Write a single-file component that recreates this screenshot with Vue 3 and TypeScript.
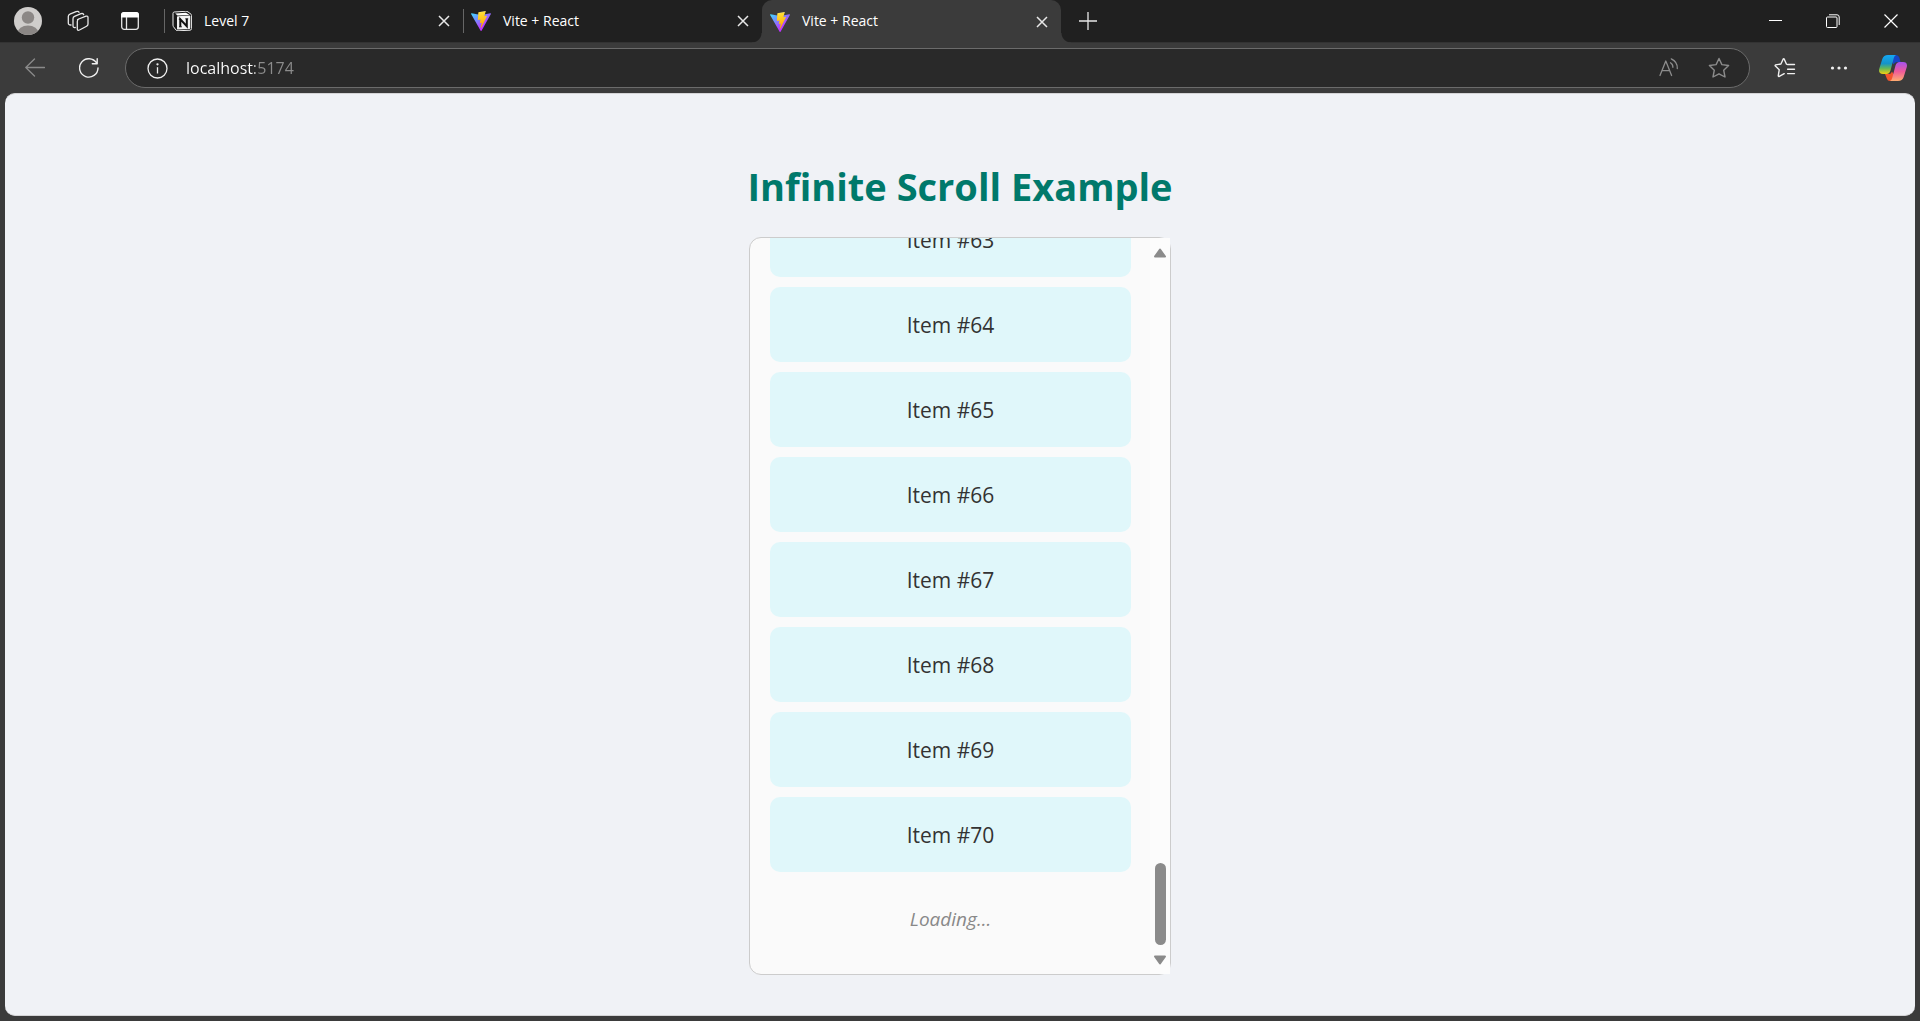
<script setup lang="ts">
import { ref } from 'vue'

interface Tab {
  id: number
  title: string
  icon: 'notion' | 'vite'
}

const tabs: Tab[] = [
  { id: 1, title: 'Level 7', icon: 'notion' },
  { id: 2, title: 'Vite + React', icon: 'vite' },
  { id: 3, title: 'Vite + React', icon: 'vite' },
]
const activeTab = ref(3)
const address = ref('localhost:5174')
const items: number[] = Array.from({ length: 8 }, (_, i) => 63 + i)
</script>

<template>
  <div class="browser">
    <header class="titlebar">
      <button class="avatar" aria-label="Profile">
        <svg width="28" height="28" viewBox="0 0 28 28">
          <defs><clipPath id="face"><circle cx="14" cy="14" r="14" /></clipPath></defs>
          <g clip-path="url(#face)">
            <rect width="28" height="28" fill="#cfcdcb" />
            <circle cx="14" cy="10.500" r="6.200" fill="#8b8785" />
            <ellipse cx="14" cy="26" rx="10.500" ry="7.500" fill="#8b8785" />
          </g>
        </svg>
      </button>
      <button class="tool workspaces" aria-label="Workspaces">
        <svg width="22" height="22" viewBox="0 0 22 22" fill="none" stroke="#e8e8e8" stroke-width="1.300" stroke-linejoin="round" stroke-linecap="round">
          <path d="M10.500 9.500 19 6.200Q21 5.600 21 7.600V14Q21 15.500 19.600 16.200L12.500 20Q10.300 21 10.300 18.800V11.500Q10.300 9.700 11.800 9Z" />
          <path d="M8.300 17.500Q6 18 6 15.800V8.700Q6 7 7.500 6.400L14 3.700Q16.200 3 16.700 4.700" />
          <path d="M4 15Q1.300 15.200 1.300 13V6.500Q1.300 4.700 2.900 4.100L9 1.600Q11.500.700 12 2.300" />
        </svg>
      </button>
      <button class="tool" aria-label="Tab actions">
        <svg width="20" height="20" viewBox="0 0 20 20">
          <rect x="1.700" y="1.700" width="16.600" height="16.600" rx="2.500" fill="none" stroke="#e8e8e8" stroke-width="1.300" />
          <path d="M1 6.500V4Q1 1 4 1H16Q19 1 19 4V6.500Z" fill="#fff" />
          <path d="M6.500 6V18" stroke="#e8e8e8" stroke-width="1.300" />
        </svg>
      </button>

      <nav class="tabs">
        <div v-for="tab in tabs" :key="tab.id" class="tab" :class="{ active: tab.id === activeTab }">
          <button class="tab-main" @click="activeTab = tab.id">
            <svg v-if="tab.icon === 'notion'" width="20" height="20" viewBox="0 0 20 20">
              <path d="M1 2.300Q1 1.200 2.200 1L13.500.300Q15 .200 16 .900L19 3.200Q19.600 3.700 19.600 4.600V17.500Q19.600 19 18 19.200L6 19.800Q4.700 19.800 4 19L1.400 15.600Q1 15 1 14Z" fill="#191919" stroke="#eee" stroke-width="1" />
              <path d="M3.200 2.600 14 1.700 17.500 4 5.500 4.600Z" fill="#fff" />
              <path d="M5 6Q5 5.300 5.800 5.200L17.600 4.600Q18.300 4.600 18.300 5.300V17Q18.300 17.900 17.500 18L5.900 18.600Q5 18.600 5 17.700Z" fill="#f2f2f2" />
              <path d="M8.300 15.700V8.300L14.800 15.300V8" fill="none" stroke="#111" stroke-width="2" />
              <path d="M6.800 8.200H9M13.300 7.800H16.200M7 15.800H9.800" stroke="#111" stroke-width="1" />
            </svg>
            <svg v-else width="20" height="20" viewBox="0 0 256 257">
              <defs>
                <linearGradient :id="'shield' + tab.id" x1="-.828%" x2="57.636%" y1="7.652%" y2="78.411%">
                  <stop offset="0%" stop-color="#41D1FF" />
                  <stop offset="100%" stop-color="#BD34FE" />
                </linearGradient>
                <linearGradient :id="'bolt' + tab.id" x1="43.376%" x2="50.316%" y1="2.242%" y2="89.030%">
                  <stop offset="0%" stop-color="#FFEA83" />
                  <stop offset="8.333%" stop-color="#FFDD35" />
                  <stop offset="100%" stop-color="#FFA800" />
                </linearGradient>
              </defs>
              <path :fill="`url(#shield${tab.id})`" d="M255.153 37.938L134.897 252.976c-2.483 4.440-8.862 4.466-11.382.048L.875 37.958c-2.746-4.814 1.371-10.646 6.827-9.670l120.385 21.517a6.537 6.537 0 0 0 2.322-.004l117.867-21.483c5.438-.991 9.574 4.796 6.877 9.620Z" />
              <path :fill="`url(#bolt${tab.id})`" d="M185.432.063L96.440 17.501a3.268 3.268 0 0 0-2.634 3.014l-5.474 92.456a3.268 3.268 0 0 0 3.997 3.378l24.777-5.718c2.318-.535 4.413 1.507 3.936 3.838l-7.361 36.047c-.495 2.426 1.782 4.500 4.151 3.780l15.304-4.649c2.372-.720 4.652 1.360 4.150 3.788l-11.698 56.621c-.732 3.542 3.979 5.473 5.943 2.437l1.313-2.028l72.516-144.720c1.215-2.423-.880-5.186-3.540-4.672l-25.505 4.922c-2.396.462-4.435-1.770-3.759-4.114l16.646-57.705c.677-2.350-1.370-4.583-3.769-4.113Z" />
            </svg>
            <span>{{ tab.title }}</span>
          </button>
          <button class="tab-close" aria-label="Close tab">
            <svg width="12" height="12" viewBox="0 0 12 12" stroke="#e8e8e8" stroke-width="1.500"><path d="M1 1 11 11M11 1 1 11" /></svg>
          </button>
        </div>
      </nav>
      <button class="new-tab" aria-label="New tab">
        <svg width="18" height="18" viewBox="0 0 18 18" stroke="#e8e8e8" stroke-width="1.300"><path d="M9 0V18M0 9H18" /></svg>
      </button>

      <div class="window-controls">
        <button aria-label="Minimize">
          <svg width="14" height="14" viewBox="0 0 14 14"><path d="M1 6.500H14" stroke="#fff" /></svg>
        </button>
        <button aria-label="Restore">
          <svg width="14" height="14" viewBox="0 0 14 14" fill="none" stroke="#fff">
            <rect x=".500" y="3" width="10.500" height="10.500" rx="1" />
            <path d="M3 .800H11Q13.200.800 13.200 3V11" />
          </svg>
        </button>
        <button aria-label="Close">
          <svg width="14" height="14" viewBox="0 0 14 14" stroke="#fff" stroke-width="1.200"><path d="M.500.500 13.500 13.500M13.500.500.500 13.500" /></svg>
        </button>
      </div>
    </header>

    <div class="toolbar">
      <button class="nav-button" aria-label="Back">
        <svg width="20" height="20" viewBox="0 0 20 20" fill="none" stroke="#8a8a8a" stroke-width="1.300" stroke-linecap="round" stroke-linejoin="round"><path d="M19.500 9.500H.800M9.500 1 .800 9.500 9.500 18" /></svg>
      </button>
      <button class="nav-button" aria-label="Refresh">
        <svg width="20" height="20" viewBox="0 0 20 20" fill="none" stroke="#f0f0f0" stroke-width="1.400" stroke-linecap="round" stroke-linejoin="round">
          <path d="M19 10A9.200 9.200 0 1 1 17.600 5M18.200.800V5.700H13.300" />
        </svg>
      </button>
      <div class="address">
        <button class="info" aria-label="Site information">
          <svg width="21" height="21" viewBox="0 0 21 21" fill="none" stroke="#f0f0f0" stroke-width="1.300">
            <circle cx="10.500" cy="10.500" r="9.500" /><path d="M10.500 9.200V15.500" /><circle cx="10.500" cy="6.300" r=".500" />
          </svg>
        </button>
        <input v-model="address" class="url" type="text" aria-label="Address" />
        <button class="in-address" aria-label="Read aloud">
          <svg width="20" height="20" viewBox="0 0 20 20" fill="none" stroke="#8c8c8c" stroke-width="1.300" stroke-linecap="round" stroke-linejoin="round">
            <path d="M1 17.500 6.800 3 12.600 17.500M3 12.700H10.600" /><path d="M11.500 4.800Q14 6.300 13.900 9.300M12.300.900Q18.700 4 18.300 10.500" />
          </svg>
        </button>
        <button class="in-address" aria-label="Add to favorites">
          <svg width="22" height="22" viewBox="0 0 22 22" fill="none" stroke="#8c8c8c" stroke-width="1.400" stroke-linejoin="round">
            <path d="M11 1.500 13.900 7.600 20.600 8.500 15.700 13.200 17 20 11 16.800 5 20 6.300 13.200 1.400 8.500 8.100 7.600Z" />
          </svg>
        </button>
      </div>
      <button class="nav-button" aria-label="Favorites">
        <svg width="22" height="22" viewBox="0 0 22 22" fill="none" stroke="#f0f0f0" stroke-width="1.400" stroke-linecap="round" stroke-linejoin="round">
          <path d="M13.600 7.500H20.500M13.600 12.200H20.500M13.600 16.600H20.500M12.500 7.200 10.300 2.200Q9.700 1.200 9.100 2.200L6.900 7 1.600 7.900Q.700 8.200 1.400 9L5.200 12.800 4.300 18.700Q4.300 19.800 5.300 19.300L10.200 16.700" />
        </svg>
      </button>
      <button class="nav-button" aria-label="More">
        <svg width="18" height="18" viewBox="0 0 18 18" fill="#f0f0f0"><circle cx="2.500" cy="9" r="1.600" /><circle cx="9" cy="9" r="1.600" /><circle cx="15.500" cy="9" r="1.600" /></svg>
      </button>
      <button class="nav-button" aria-label="Copilot">
        <svg width="28" height="26" viewBox="0 0 28 26">
          <defs>
            <linearGradient id="cp-left" x1="0" y1="0" x2="0" y2="1"><stop offset="0" stop-color="#14a8f4" /><stop offset=".450" stop-color="#1593c9" /><stop offset=".700" stop-color="#62b75a" /><stop offset="1" stop-color="#f2cf11" /></linearGradient>
            <linearGradient id="cp-right" x1="0" y1="0" x2="0" y2="1"><stop offset="0" stop-color="#a552ef" /><stop offset=".500" stop-color="#ef5a9a" /><stop offset="1" stop-color="#ffad70" /></linearGradient>
          </defs>
          <path d="M13 0H17Q19.500 0 20.300 2.500L21.500 7H18Q15.500 7 14.600 9.500L12 5Z" fill="#1745c5" />
          <path d="M6 19H10Q12 19 13 16.500L16 22 15 26H11Q8.600 26 7.800 23.500Z" fill="#f2542d" />
          <path d="M9 0H17Q15.500.300 14.800 3L11.500 15.500Q10.400 19 7.500 19H4Q-.800 19 .200 14L3.300 4Q4.600 0 9 0Z" fill="url(#cp-left)" />
          <path d="M19 26H11Q12.500 25.700 13.200 23L16.500 10.500Q17.600 7 20.500 7H24Q28.800 7 27.800 12L24.700 22Q23.400 26 19 26Z" fill="url(#cp-right)" />
        </svg>
      </button>
    </div>

    <main class="page">
      <h1>Infinite Scroll Example</h1>
      <section class="scroller">
        <div class="viewport">
          <ul class="items">
            <li v-for="n in items" :key="n">Item #{{ n }}</li>
          </ul>
          <p class="loading">Loading...</p>
        </div>
        <div class="scrollbar">
          <svg width="14" height="10" viewBox="0 0 14 10"><path d="M7 1.500 12 8.500H2Z" fill="#8b8b8b" stroke="#8b8b8b" stroke-width="2" stroke-linejoin="round" /></svg>
          <div class="track"><div class="thumb"></div></div>
          <svg width="14" height="10" viewBox="0 0 14 10"><path d="M7 8.500 12 1.500H2Z" fill="#8b8b8b" stroke="#8b8b8b" stroke-width="2" stroke-linejoin="round" /></svg>
        </div>
      </section>
    </main>
  </div>
</template>

<style>
body {
  background: #3b3b3b;
}
</style>

<style scoped>
* {
  box-sizing: border-box;
}

.browser {
  display: flex;
  flex-direction: column;
  min-height: 100vh;
  padding-bottom: 5px;
  background: #3b3b3b;
  font-family: "Open Sans", "Noto Sans", sans-serif;
}

button {
  display: flex;
  align-items: center;
  justify-content: center;
  padding: 0;
  border: 0;
  background: none;
  color: inherit;
  font: inherit;
}

svg {
  display: block;
  flex: none;
}

.titlebar {
  display: flex;
  height: 43px;
  padding-left: 14px;
  border-bottom: 1px solid #333;
  background: #202020;
  color: #fff;
}

.avatar {
  width: 28px;
}

.tool {
  width: 52px;
}

.workspaces {
  margin-left: 10px;
}

.tabs {
  display: flex;
  min-width: 0;
  margin-left: 8px;
}

.tab {
  position: relative;
  display: flex;
  width: 299px;
  min-width: 0;
  height: 42px;
}

.tab:not(.active) {
  background: linear-gradient(#666, #666) left center / 1px 24px no-repeat;
}

.tab.active {
  height: 43px;
  border-radius: 10px 10px 0 0;
  background: #3b3b3b;
}

.tab.active::before,
.tab.active::after {
  content: "";
  position: absolute;
  bottom: 0;
  width: 10px;
  height: 10px;
}

.tab.active::before {
  right: 100%;
  background: radial-gradient(circle at 0 0, transparent 9px, #3b3b3b 10px);
}

.tab.active::after {
  left: 100%;
  background: radial-gradient(circle at 100% 0, transparent 9px, #3b3b3b 10px);
}

.tab-main {
  flex: 1;
  justify-content: flex-start;
  gap: 12px;
  min-width: 0;
  padding-left: 8px;
  font-size: 14px;
  white-space: nowrap;
}

.tab-main span {
  padding-bottom: 2px;
}

.tab-close {
  width: 38px;
}

.new-tab {
  width: 54px;
}

.window-controls {
  display: flex;
  margin-left: auto;
}

.window-controls button {
  width: 58px;
}

.toolbar {
  display: flex;
  align-items: center;
  height: 50px;
  padding-left: 8px;
}

.nav-button {
  width: 54px;
  height: 40px;
}

.address {
  display: flex;
  flex: 1;
  align-items: center;
  height: 40px;
  margin: 0 8px 0 9px;
  padding: 0 5px 0 7px;
  border: 1px solid #6b6b6b;
  border-radius: 20px;
  background: #292929;
}

.info {
  width: 48px;
}

.url {
  flex: 1;
  min-width: 0;
  height: 30px;
  margin-left: 5px;
  padding: 0;
  border: 0;
  outline: 0;
  background: linear-gradient(90deg, #fff 69px, #8c8c8c 69px);
  -webkit-background-clip: text;
  background-clip: text;
  color: transparent;
  font: 16px "Open Sans", "Noto Sans", sans-serif;
}

.in-address {
  width: 50px;
}

.page {
  display: flex;
  flex: 1;
  flex-direction: column;
  align-items: center;
  margin: 0 5px;
  padding: 62px 0 40px;
  border-top: 1px solid #d4d4d6;
  border-bottom: 1px solid #d4d4d6;
  border-radius: 10px;
  background: #f0f2f6;
}

h1 {
  margin: 0 0 21px;
  color: #00796b;
  font-size: 38px;
  font-weight: 700;
  line-height: 60px;
}

.scroller {
  display: flex;
  width: 422px;
  max-width: 100%;
  height: calc((100vh - 98px) * 0.8);
  border: 1px solid #ccc;
  border-radius: 12px;
  background: #fafafa;
}

.viewport {
  display: flex;
  flex: 1;
  flex-direction: column;
  justify-content: flex-end;
  overflow: hidden;
  padding: 0 19px 0 20px;
  border-radius: 11px 0 0 11px;
}

.items {
  display: flex;
  flex-direction: column;
  gap: 10px;
  margin: 0;
  padding: 0;
  list-style: none;
}

.items li {
  display: flex;
  align-items: center;
  justify-content: center;
  height: 75px;
  border-radius: 10px;
  background: #e0f7fa;
  color: #333;
  font-size: 21px;
}

.loading {
  margin: 0;
  padding: 34px 0 41px;
  color: #888;
  font-size: 19px;
  font-style: italic;
  line-height: 27px;
  text-align: center;
}

.scrollbar {
  display: flex;
  flex-direction: column;
  align-items: center;
  width: 20px;
  padding: 10px 0 9px;
  background: #fcfcfc;
}

.track {
  display: flex;
  flex: 1;
  flex-direction: column;
  justify-content: flex-end;
  padding: 10px 0;
}

.thumb {
  width: 11px;
  height: 82px;
  border-radius: 6px;
  background: #8b8b8b;
}
</style>
